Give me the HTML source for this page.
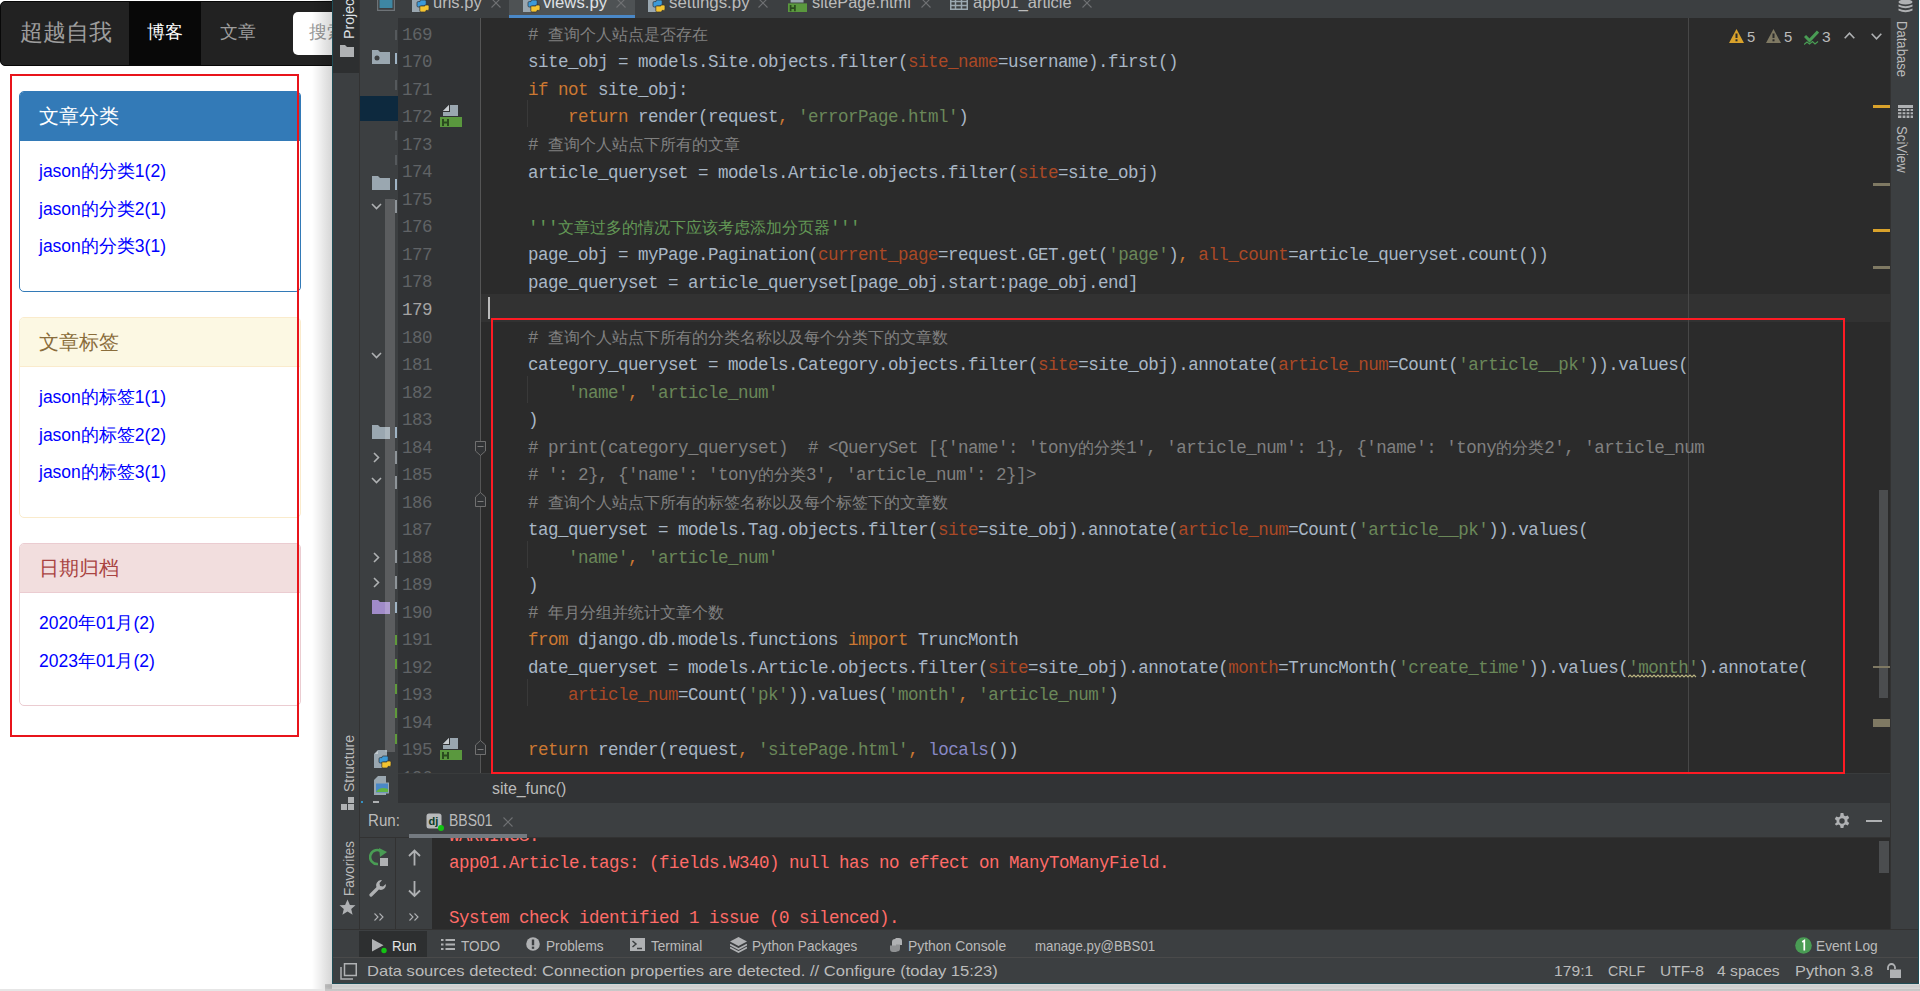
<!DOCTYPE html>
<html><head><meta charset="utf-8">
<style>
*{margin:0;padding:0;box-sizing:border-box}
html,body{width:1920px;height:991px;overflow:hidden;background:#fff;font-family:"Liberation Sans",sans-serif}
.a{position:absolute}
.pn{position:absolute;left:19px;width:282px;border:1px solid;border-radius:5px;background:#fff;overflow:hidden}
.ph{position:absolute;left:0;top:0;width:280px;height:49px;border-bottom:1px solid;font-size:20px;padding:0 0 0 19px;line-height:48px;white-space:nowrap}
.lk{position:absolute;left:19px;font-size:17.5px;line-height:20px;color:#00f;white-space:nowrap}
.m{position:absolute;font-family:"Liberation Mono",monospace;font-size:17.5px;letter-spacing:-0.5px;line-height:27.5px;white-space:pre;color:#a9b7c6}
.u{position:absolute;font-family:"Liberation Sans",sans-serif;white-space:nowrap}
.m i{font-style:normal;display:inline-block;width:16px;text-align:center;font-size:16px;letter-spacing:0}
.k{color:#cc7832}.s{color:#6a8759}.c{color:#808080}.n{color:#aa4926}.b{color:#8888c6}.d{color:#629755}
.ln{position:absolute;left:0px;width:34px;text-align:right;font-family:"Liberation Mono",monospace;font-size:17.5px;letter-spacing:-0.5px;line-height:27.5px;color:#606366}
</style></head><body>
<div class="a" style="left:0;top:1px;width:340px;height:65px;background:#222;border:1px solid #080808;border-radius:5px"></div>
<div class="u" style="left:20px;top:20px;font-size:22.5px;line-height:26px;color:#9d9d9d">超越自我</div>
<div class="a" style="left:129px;top:2px;width:72px;height:63px;background:#080808"></div>
<div class="u" style="left:147px;top:22px;font-size:17.5px;line-height:20px;color:#fff">博客</div>
<div class="u" style="left:220px;top:22px;font-size:17.5px;line-height:20px;color:#9d9d9d">文章</div>
<div class="a" style="left:293px;top:12px;width:80px;height:43px;background:#fff;border-radius:5px"></div>
<div class="u" style="left:309px;top:22px;font-size:17.5px;line-height:20px;color:#999">搜索</div>
<div class="pn" style="top:91px;height:201px;border-color:#337ab7">
  <div class="ph" style="background:#337ab7;color:#fff;border-color:#337ab7">文章分类</div>
  <div class="lk" style="top:69px">jason的分类1(2)</div>
  <div class="lk" style="top:107px">jason的分类2(1)</div>
  <div class="lk" style="top:144px">jason的分类3(1)</div>
</div>
<div class="pn" style="top:317px;height:201px;border-color:#faebcc">
  <div class="ph" style="background:#fcf8e3;color:#8a6d3b;border-color:#faebcc">文章标签</div>
  <div class="lk" style="top:69px">jason的标签1(1)</div>
  <div class="lk" style="top:107px">jason的标签2(2)</div>
  <div class="lk" style="top:144px">jason的标签3(1)</div>
</div>
<div class="pn" style="top:543px;height:163px;border-color:#ebccd1">
  <div class="ph" style="background:#f2dede;color:#a94442;border-color:#ebccd1">日期归档</div>
  <div class="lk" style="top:69px">2020年01月(2)</div>
  <div class="lk" style="top:107px">2023年01月(2)</div>
</div>
<div class="a" style="left:10px;top:74px;width:289px;height:663px;border:2px solid #e8141b"></div>
<div class="a" style="left:312px;top:0;width:20px;height:991px;background:linear-gradient(to right,rgba(0,0,0,0),rgba(0,0,0,.16))"></div>
<div class="a" style="left:0;top:989px;width:1920px;height:2px;background:#e6e6e6"></div>
<div class="a" style="left:325px;top:984px;width:1595px;height:7px;background:linear-gradient(to bottom,rgba(0,0,0,.15),rgba(0,0,0,.2) 30%,rgba(0,0,0,.12) 100%)"></div>

<div class="a" style="left:332px;top:0;width:1587px;height:984px;background:#3c3f41;border-left:1px solid #1f4d56;border-right:1px solid #1f4d56;border-bottom:1px solid #1f4d56"></div>
<!-- left tool strip selected -->
<div class="a" style="left:333px;top:0;width:26px;height:73px;background:#2d2f30"></div>
<div class="a" style="left:359px;top:0;width:1px;height:929px;background:#323232"></div>
<!-- gutter -->
<div class="a" style="left:398px;top:18px;width:83px;height:755px;background:#313335"></div>
<div class="a" style="left:480px;top:18px;width:1px;height:755px;background:#555"></div>
<!-- editor -->
<div class="a" style="left:481px;top:18px;width:1409px;height:755px;background:#2b2b2b"></div>
<div class="a" style="left:481px;top:294px;width:1409px;height:27.5px;background:#323232"></div>
<div class="a" style="left:1688px;top:18px;width:1px;height:755px;background:#474747"></div>
<!-- breadcrumb -->
<div class="a" style="left:398px;top:773px;width:1492px;height:30px;background:#313335;border-top:1px solid #393b3c"></div>
<!-- run console -->
<div class="a" style="left:432px;top:838px;width:1458px;height:91px;background:#2b2b2b"></div>
<div class="a" style="left:360px;top:837px;width:1530px;height:1px;background:#323232"></div>
<div class="a" style="left:333px;top:929px;width:1585px;height:1px;background:#323232"></div>
<div class="a" style="left:333px;top:957px;width:1585px;height:1px;background:#4a4a4a"></div>
<!-- right strip -->
<div class="a" style="left:1890px;top:18px;width:1px;height:911px;background:#323232"></div>
<div class="a" style="left:398px;top:18px;width:1492px;height:755px;overflow:hidden"><div class="m" style="left:90px;top:3.90px">    <span class="c"># <i>查</i><i>询</i><i>个</i><i>人</i><i>站</i><i>点</i><i>是</i><i>否</i><i>存</i><i>在</i></span></div>
<div class="ln" style="top:3.80px;">169</div>
<div class="m" style="left:90px;top:31.42px">    site_obj = models.Site.objects.filter(<span class="n">site_name</span>=username).first()</div>
<div class="ln" style="top:31.32px;">170</div>
<div class="m" style="left:90px;top:58.94px">    <span class="k">if not</span> site_obj:</div>
<div class="ln" style="top:58.84px;">171</div>
<div class="m" style="left:90px;top:86.46px">        <span class="k">return</span> render(request<span class="k">,</span> <span class="s">'errorPage.html'</span>)</div>
<div class="ln" style="top:86.36px;">172</div>
<div class="m" style="left:90px;top:113.98px">    <span class="c"># <i>查</i><i>询</i><i>个</i><i>人</i><i>站</i><i>点</i><i>下</i><i>所</i><i>有</i><i>的</i><i>文</i><i>章</i></span></div>
<div class="ln" style="top:113.88px;">173</div>
<div class="m" style="left:90px;top:141.50px">    article_queryset = models.Article.objects.filter(<span class="n">site</span>=site_obj)</div>
<div class="ln" style="top:141.40px;">174</div>
<div class="m" style="left:90px;top:169.02px"></div>
<div class="ln" style="top:168.92px;">175</div>
<div class="m" style="left:90px;top:196.54px">    <span class="d">'''<i>文</i><i>章</i><i>过</i><i>多</i><i>的</i><i>情</i><i>况</i><i>下</i><i>应</i><i>该</i><i>考</i><i>虑</i><i>添</i><i>加</i><i>分</i><i>页</i><i>器</i>'''</span></div>
<div class="ln" style="top:196.44px;">176</div>
<div class="m" style="left:90px;top:224.06px">    page_obj = myPage.Pagination(<span class="n">current_page</span>=request.GET.get(<span class="s">'page'</span>)<span class="k">,</span> <span class="n">all_count</span>=article_queryset.count())</div>
<div class="ln" style="top:223.96px;">177</div>
<div class="m" style="left:90px;top:251.58px">    page_queryset = article_queryset[page_obj.start:page_obj.end]</div>
<div class="ln" style="top:251.48px;">178</div>
<div class="m" style="left:90px;top:279.10px"></div>
<div class="ln" style="top:279.00px;color:#a4a3a3">179</div>
<div class="m" style="left:90px;top:306.62px">    <span class="c"># <i>查</i><i>询</i><i>个</i><i>人</i><i>站</i><i>点</i><i>下</i><i>所</i><i>有</i><i>的</i><i>分</i><i>类</i><i>名</i><i>称</i><i>以</i><i>及</i><i>每</i><i>个</i><i>分</i><i>类</i><i>下</i><i>的</i><i>文</i><i>章</i><i>数</i></span></div>
<div class="ln" style="top:306.52px;">180</div>
<div class="m" style="left:90px;top:334.14px">    category_queryset = models.Category.objects.filter(<span class="n">site</span>=site_obj).annotate(<span class="n">article_num</span>=Count(<span class="s">'article__pk'</span>)).values(</div>
<div class="ln" style="top:334.04px;">181</div>
<div class="m" style="left:90px;top:361.66px">        <span class="s">'name'</span><span class="k">,</span> <span class="s">'article_num'</span></div>
<div class="ln" style="top:361.56px;">182</div>
<div class="m" style="left:90px;top:389.18px">    )</div>
<div class="ln" style="top:389.08px;">183</div>
<div class="m" style="left:90px;top:416.70px">    <span class="c"># print(category_queryset)  # &lt;QuerySet [{'name': 'tony<i>的</i><i>分</i><i>类</i>1', 'article_num': 1}, {'name': 'tony<i>的</i><i>分</i><i>类</i>2', 'article_num</span></div>
<div class="ln" style="top:416.60px;">184</div>
<div class="m" style="left:90px;top:444.22px">    <span class="c"># ': 2}, {'name': 'tony<i>的</i><i>分</i><i>类</i>3', 'article_num': 2}]&gt;</span></div>
<div class="ln" style="top:444.12px;">185</div>
<div class="m" style="left:90px;top:471.74px">    <span class="c"># <i>查</i><i>询</i><i>个</i><i>人</i><i>站</i><i>点</i><i>下</i><i>所</i><i>有</i><i>的</i><i>标</i><i>签</i><i>名</i><i>称</i><i>以</i><i>及</i><i>每</i><i>个</i><i>标</i><i>签</i><i>下</i><i>的</i><i>文</i><i>章</i><i>数</i></span></div>
<div class="ln" style="top:471.64px;">186</div>
<div class="m" style="left:90px;top:499.26px">    tag_queryset = models.Tag.objects.filter(<span class="n">site</span>=site_obj).annotate(<span class="n">article_num</span>=Count(<span class="s">'article__pk'</span>)).values(</div>
<div class="ln" style="top:499.16px;">187</div>
<div class="m" style="left:90px;top:526.78px">        <span class="s">'name'</span><span class="k">,</span> <span class="s">'article_num'</span></div>
<div class="ln" style="top:526.68px;">188</div>
<div class="m" style="left:90px;top:554.30px">    )</div>
<div class="ln" style="top:554.20px;">189</div>
<div class="m" style="left:90px;top:581.82px">    <span class="c"># <i>年</i><i>月</i><i>分</i><i>组</i><i>并</i><i>统</i><i>计</i><i>文</i><i>章</i><i>个</i><i>数</i></span></div>
<div class="ln" style="top:581.72px;">190</div>
<div class="m" style="left:90px;top:609.34px">    <span class="k">from</span> django.db.models.functions <span class="k">import</span> TruncMonth</div>
<div class="ln" style="top:609.24px;">191</div>
<div class="m" style="left:90px;top:636.86px">    date_queryset = models.Article.objects.filter(<span class="n">site</span>=site_obj).annotate(<span class="n">month</span>=TruncMonth(<span class="s">'create_time'</span>)).values(<span class="s">'month'</span>).annotate(</div>
<div class="ln" style="top:636.76px;">192</div>
<div class="m" style="left:90px;top:664.38px">        <span class="n">article_num</span>=Count(<span class="s">'pk'</span>)).values(<span class="s">'month'</span><span class="k">,</span> <span class="s">'article_num'</span>)</div>
<div class="ln" style="top:664.28px;">193</div>
<div class="m" style="left:90px;top:691.90px"></div>
<div class="ln" style="top:691.80px;">194</div>
<div class="m" style="left:90px;top:719.42px">    <span class="k">return</span> render(request<span class="k">,</span> <span class="s">'sitePage.html'</span><span class="k">,</span> <span class="b">locals</span>())</div>
<div class="ln" style="top:719.32px;">195</div>
<div class="m" style="left:90px;top:746.94px"></div>
<div class="ln" style="top:746.84px;">196</div></div><div class="a" style="left:509px;top:0px;width:126px;height:15px;background:#4e5254;"></div>
<div class="a" style="left:509px;top:15px;width:126px;height:3px;background:#4a88c7;"></div>
<svg class="a" style="left:377px;top:0px" width="18" height="11" viewBox="0 0 18 11"><rect x="0.5" y="-2" width="17" height="12.5" fill="none" stroke="#6e7377" stroke-width="1.5"/><rect x="2.5" y="-2" width="13" height="10" fill="#3e87a3"/></svg>
<svg class="a" style="left:412px;top:-6px" width="18" height="19" viewBox="0 0 18 19"><path d="M0 4 L4 0 H13 V18 H0 Z" fill="#9aa7b0"/><path d="M0.6 4 L4 0.6 V4 Z" fill="#c3cacf"/><g transform="translate(5,6)"><path d="M4 0h4a1.2 1.2 0 0 1 1.2 1.2v4.8h-5v1h-3a1.2 1.2 0 0 1-1.2-1.2v-3a1.2 1.2 0 0 1 1.2-1.2h1.8v-.4a1.2 1.2 0 0 1 1-1.2z" fill="#3d9ad8" stroke="#2f3133" stroke-width=".7"/><path d="M8 12h-4a1.2 1.2 0 0 1-1.2-1.2v-4.8h5v-1h3a1.2 1.2 0 0 1 1.2 1.2v3a1.2 1.2 0 0 1-1.2 1.2h-1.8v.4a1.2 1.2 0 0 1-1 1.2z" fill="#f4c430" stroke="#2f3133" stroke-width=".7"/></g></svg>
<div class="u" style="left:433.0px;top:-4.54px;font-size:16.00px;line-height:16.00px;color:#bbbbbb;transform:scaleX(1.0330);transform-origin:0 0;">urls.py</div>
<div class="u" style="left:543.1px;top:-4.54px;font-size:16.00px;line-height:16.00px;color:#dfe1e5;transform:scaleX(1.0445);transform-origin:0 0;">views.py</div>
<svg class="a" style="left:523px;top:-6px" width="18" height="19" viewBox="0 0 18 19"><path d="M0 4 L4 0 H13 V18 H0 Z" fill="#9aa7b0"/><path d="M0.6 4 L4 0.6 V4 Z" fill="#c3cacf"/><g transform="translate(5,6)"><path d="M4 0h4a1.2 1.2 0 0 1 1.2 1.2v4.8h-5v1h-3a1.2 1.2 0 0 1-1.2-1.2v-3a1.2 1.2 0 0 1 1.2-1.2h1.8v-.4a1.2 1.2 0 0 1 1-1.2z" fill="#3d9ad8" stroke="#2f3133" stroke-width=".7"/><path d="M8 12h-4a1.2 1.2 0 0 1-1.2-1.2v-4.8h5v-1h3a1.2 1.2 0 0 1 1.2 1.2v3a1.2 1.2 0 0 1-1.2 1.2h-1.8v.4a1.2 1.2 0 0 1-1 1.2z" fill="#f4c430" stroke="#2f3133" stroke-width=".7"/></g></svg>
<svg class="a" style="left:648px;top:-6px" width="18" height="19" viewBox="0 0 18 19"><path d="M0 4 L4 0 H13 V18 H0 Z" fill="#9aa7b0"/><path d="M0.6 4 L4 0.6 V4 Z" fill="#c3cacf"/><g transform="translate(5,6)"><path d="M4 0h4a1.2 1.2 0 0 1 1.2 1.2v4.8h-5v1h-3a1.2 1.2 0 0 1-1.2-1.2v-3a1.2 1.2 0 0 1 1.2-1.2h1.8v-.4a1.2 1.2 0 0 1 1-1.2z" fill="#3d9ad8" stroke="#2f3133" stroke-width=".7"/><path d="M8 12h-4a1.2 1.2 0 0 1-1.2-1.2v-4.8h5v-1h3a1.2 1.2 0 0 1 1.2 1.2v3a1.2 1.2 0 0 1-1.2 1.2h-1.8v.4a1.2 1.2 0 0 1-1 1.2z" fill="#f4c430" stroke="#2f3133" stroke-width=".7"/></g></svg>
<div class="u" style="left:668.8px;top:-4.54px;font-size:16.00px;line-height:16.00px;color:#bbbbbb;transform:scaleX(1.0535);transform-origin:0 0;">settings.py</div>
<svg class="a" style="left:788px;top:-7px" width="19" height="19" viewBox="0 0 22 22"><path d="M9 0 L3 6 L3 11 L18 11 L18 0 Z" fill="#9aa7b0"/><path d="M9 0 L9 6 L3 6 Z" fill="#c9cdd0"/><path d="M9 6 L3 6 L3 7 L10 7 L10 0 L9 0 Z" fill="#313335"/><rect x="0" y="12" width="22" height="10" fill="#5a983e"/><path d="M3 14 v7 M8 14 v7 M3 17.5 h5" stroke="#2a4a1e" stroke-width="2" fill="none"/></svg>
<div class="u" style="left:811.9px;top:-4.54px;font-size:16.00px;line-height:16.00px;color:#bbbbbb;transform:scaleX(1.0190);transform-origin:0 0;">sitePage.html</div>
<svg class="a" style="left:950px;top:0px" width="18" height="10" viewBox="0 0 18 10"><path d="M0.75 -2 V9.25 H17.25 V-2 M0 1.5 H18 M0 5.5 H18 M5.5 -2 V9 M11.5 -2 V9" stroke="#9aa7b0" stroke-width="1.5" fill="none"/></svg>
<div class="u" style="left:973.1px;top:-4.54px;font-size:16.00px;line-height:16.00px;color:#bbbbbb;transform:scaleX(1.0261);transform-origin:0 0;">app01_article</div>
<svg class="a" style="left:491px;top:-2px" width="10" height="10" viewBox="0 0 10 10"><path d="M0.5 0.5 L9.5 9.5 M9.5 0.5 L0.5 9.5" stroke="#6f7173" stroke-width="1.1"/></svg>
<svg class="a" style="left:616px;top:-2px" width="10" height="10" viewBox="0 0 10 10"><path d="M0.5 0.5 L9.5 9.5 M9.5 0.5 L0.5 9.5" stroke="#6f7173" stroke-width="1.1"/></svg>
<svg class="a" style="left:758px;top:-2px" width="10" height="10" viewBox="0 0 10 10"><path d="M0.5 0.5 L9.5 9.5 M9.5 0.5 L0.5 9.5" stroke="#6f7173" stroke-width="1.1"/></svg>
<svg class="a" style="left:921px;top:-2px" width="10" height="10" viewBox="0 0 10 10"><path d="M0.5 0.5 L9.5 9.5 M9.5 0.5 L0.5 9.5" stroke="#6f7173" stroke-width="1.1"/></svg>
<svg class="a" style="left:1082px;top:-2px" width="10" height="10" viewBox="0 0 10 10"><path d="M0.5 0.5 L9.5 9.5 M9.5 0.5 L0.5 9.5" stroke="#6f7173" stroke-width="1.1"/></svg>
<div class="u" style="left:340.5px;top:38.5px;font-size:15.0px;line-height:15.0px;color:#dfe1e5;transform-origin:0 0;transform:rotate(-90deg) scaleX(0.9425)">Project</div>
<svg class="a" style="left:340px;top:45px" width="14" height="12" viewBox="0 0 14 12"><path d="M0 0 h5 l2 2 h7 v10 h-14 z" fill="#afb1b3"/></svg>
<div class="u" style="left:341.0px;top:792.0px;font-size:15.0px;line-height:15.0px;color:#bbbbbb;transform-origin:0 0;transform:rotate(-90deg) scaleX(0.9366)">Structure</div>
<svg class="a" style="left:341px;top:797px" width="14" height="14" viewBox="0 0 14 14"><rect x="7" y="0" width="6" height="6" fill="#afb1b3"/><rect x="0" y="7" width="6" height="6" fill="#afb1b3"/><rect x="7" y="7" width="6" height="6" fill="#afb1b3"/></svg>
<div class="u" style="left:341.0px;top:896.0px;font-size:15.0px;line-height:15.0px;color:#bbbbbb;transform-origin:0 0;transform:rotate(-90deg) scaleX(0.8916)">Favorites</div>
<svg class="a" style="left:339px;top:899px" width="17" height="17" viewBox="0 0 17 17"><path d="M8.5 0.5 L10.9 6 L16.5 6.3 L12.2 10 L13.6 15.8 L8.5 12.6 L3.4 15.8 L4.8 10 L0.5 6.3 L6.1 6 Z" fill="#afb1b3"/></svg>
<div class="a" style="left:360px;top:96px;width:38px;height:25px;background:#0d293e;"></div>
<svg class="a" style="left:372px;top:50px" width="18" height="14" viewBox="0 0 18 14"><path d="M0 0 h6 l2 2 h10 v12 h-18 z" fill="#9aa7b0"/><circle cx="5" cy="8" r="2.5" fill="#3c3f41"/></svg>
<svg class="a" style="left:372px;top:176px" width="18" height="14" viewBox="0 0 18 14"><path d="M0 0 h6 l2 2 h10 v12 h-18 z" fill="#9aa7b0"/></svg>
<svg class="a" style="left:372px;top:425px" width="18" height="14" viewBox="0 0 18 14"><path d="M0 0 h6 l2 2 h10 v12 h-18 z" fill="#9aa7b0"/></svg>
<svg class="a" style="left:372px;top:600px" width="18" height="14" viewBox="0 0 18 14"><path d="M0 0 h6 l2 2 h10 v12 h-18 z" fill="#a08bc8"/></svg>
<svg class="a" style="left:371px;top:203px" width="11" height="11" viewBox="0 0 11 11"><path d="M1 1 L5.5 5.5 L10 1" stroke="#afb1b3" stroke-width="1.6" fill="none"/></svg>
<svg class="a" style="left:371px;top:352px" width="11" height="11" viewBox="0 0 11 11"><path d="M1 1 L5.5 5.5 L10 1" stroke="#afb1b3" stroke-width="1.6" fill="none"/></svg>
<svg class="a" style="left:371px;top:477px" width="11" height="11" viewBox="0 0 11 11"><path d="M1 1 L5.5 5.5 L10 1" stroke="#afb1b3" stroke-width="1.6" fill="none"/></svg>
<svg class="a" style="left:373px;top:452px" width="11" height="11" viewBox="0 0 11 11"><path d="M1 1 L5.5 5.5 L1 10" stroke="#afb1b3" stroke-width="1.6" fill="none"/></svg>
<svg class="a" style="left:373px;top:552px" width="11" height="11" viewBox="0 0 11 11"><path d="M1 1 L5.5 5.5 L1 10" stroke="#afb1b3" stroke-width="1.6" fill="none"/></svg>
<svg class="a" style="left:373px;top:577px" width="11" height="11" viewBox="0 0 11 11"><path d="M1 1 L5.5 5.5 L1 10" stroke="#afb1b3" stroke-width="1.6" fill="none"/></svg>
<div class="a" style="left:395px;top:30px;width:2px;height:10px;background:#55595c;"></div>
<div class="a" style="left:395px;top:80px;width:2px;height:10px;background:#55595c;"></div>
<div class="a" style="left:395px;top:131px;width:2px;height:9px;background:#55595c;"></div>
<div class="a" style="left:395px;top:155px;width:2px;height:10px;background:#55595c;"></div>
<div class="a" style="left:395px;top:200px;width:2px;height:13px;background:#8e9499;"></div>
<div class="a" style="left:395px;top:451px;width:2px;height:13px;background:#8e9499;"></div>
<div class="a" style="left:395px;top:476px;width:2px;height:13px;background:#8e9499;"></div>
<div class="a" style="left:395px;top:550px;width:2px;height:13px;background:#8e9499;"></div>
<div class="a" style="left:395px;top:576px;width:2px;height:13px;background:#8e9499;"></div>
<div class="a" style="left:395px;top:53px;width:2px;height:11px;background:#9fb3c4;"></div>
<div class="a" style="left:395px;top:179px;width:2px;height:11px;background:#9fb3c4;"></div>
<div class="a" style="left:395px;top:427px;width:2px;height:11px;background:#9fb3c4;"></div>
<div class="a" style="left:395px;top:602px;width:2px;height:11px;background:#9fb3c4;"></div>
<div class="a" style="left:395px;top:635px;width:2px;height:10px;background:#5f9a3a;"></div>
<div class="a" style="left:395px;top:659px;width:2px;height:10px;background:#5f9a3a;"></div>
<div class="a" style="left:395px;top:684px;width:2px;height:10px;background:#5f9a3a;"></div>
<div class="a" style="left:395px;top:708px;width:2px;height:10px;background:#5f9a3a;"></div>
<div class="a" style="left:395px;top:734px;width:2px;height:10px;background:#5f9a3a;"></div>
<svg class="a" style="left:374px;top:750px" width="18" height="19" viewBox="0 0 18 19"><path d="M0 4 L4 0 H13 V18 H0 Z" fill="#9aa7b0"/><path d="M0.6 4 L4 0.6 V4 Z" fill="#c3cacf"/><g transform="translate(5,6)"><path d="M4 0h4a1.2 1.2 0 0 1 1.2 1.2v4.8h-5v1h-3a1.2 1.2 0 0 1-1.2-1.2v-3a1.2 1.2 0 0 1 1.2-1.2h1.8v-.4a1.2 1.2 0 0 1 1-1.2z" fill="#3d9ad8" stroke="#2f3133" stroke-width=".7"/><path d="M8 12h-4a1.2 1.2 0 0 1-1.2-1.2v-4.8h5v-1h3a1.2 1.2 0 0 1 1.2 1.2v3a1.2 1.2 0 0 1-1.2 1.2h-1.8v.4a1.2 1.2 0 0 1-1 1.2z" fill="#f4c430" stroke="#2f3133" stroke-width=".7"/></g></svg>
<svg class="a" style="left:374px;top:776px" width="17" height="19" viewBox="0 0 17 19"><path d="M0 4 L4 0 L12 0 L12 19 L0 19 Z" fill="#9aa7b0"/><rect x="1.5" y="7" width="13" height="10" fill="#4a88c7" stroke="#9aa7b0"/><path d="M2 16 Q6 10 14 13 V16 Z" fill="#62b543"/></svg>
<div class="a" style="left:385px;top:199px;width:10px;height:553px;background:rgba(255,255,255,.16);"></div>
<div class="a" style="left:361px;top:801px;width:2px;height:2px;background:#3592c4;"></div>
<div class="a" style="left:373px;top:801px;width:6px;height:2px;background:#afb1b3;"></div>
<svg class="a" style="left:440px;top:105px" width="22" height="22" viewBox="0 0 22 22"><path d="M9 0 L3 6 L3 11 L18 11 L18 0 Z" fill="#9aa7b0"/><path d="M9 0 L9 6 L3 6 Z" fill="#c9cdd0"/><path d="M9 6 L3 6 L3 7 L10 7 L10 0 L9 0 Z" fill="#313335"/><rect x="0" y="12" width="22" height="10" fill="#5a983e"/><path d="M3 14 v7 M8 14 v7 M3 17.5 h5" stroke="#2a4a1e" stroke-width="2" fill="none"/></svg>
<svg class="a" style="left:440px;top:738px" width="22" height="22" viewBox="0 0 22 22"><path d="M9 0 L3 6 L3 11 L18 11 L18 0 Z" fill="#9aa7b0"/><path d="M9 0 L9 6 L3 6 Z" fill="#c9cdd0"/><path d="M9 6 L3 6 L3 7 L10 7 L10 0 L9 0 Z" fill="#313335"/><rect x="0" y="12" width="22" height="10" fill="#5a983e"/><path d="M3 14 v7 M8 14 v7 M3 17.5 h5" stroke="#2a4a1e" stroke-width="2" fill="none"/></svg>
<svg class="a" style="left:475px;top:441px" width="11" height="15" viewBox="0 0 11 15"><path d="M0.5 0.5 L10.5 0.5 L10.5 10 L5.5 14.5 L0.5 10 Z" fill="#313335" stroke="#707070" stroke-width="1"/><path d="M2.5 5.5 h6" stroke="#7a7a7a" stroke-width="1"/></svg>
<svg class="a" style="left:475px;top:492px" width="11" height="15" viewBox="0 0 11 15"><path d="M5.5 0.5 L10.5 5 L10.5 14.5 L0.5 14.5 L0.5 5 Z" fill="#313335" stroke="#707070" stroke-width="1"/><path d="M2.5 9.5 h6" stroke="#7a7a7a" stroke-width="1"/></svg>
<svg class="a" style="left:475px;top:740px" width="11" height="15" viewBox="0 0 11 15"><path d="M5.5 0.5 L10.5 5 L10.5 14.5 L0.5 14.5 L0.5 5 Z" fill="#313335" stroke="#707070" stroke-width="1"/><path d="M2.5 9.5 h6" stroke="#7a7a7a" stroke-width="1"/></svg>
<div class="a" style="left:527px;top:100px;width:1px;height:27px;background:#393939;"></div>
<div class="a" style="left:527px;top:376px;width:1px;height:27px;background:#393939;"></div>
<div class="a" style="left:527px;top:541px;width:1px;height:27px;background:#393939;"></div>
<div class="a" style="left:527px;top:679px;width:1px;height:27px;background:#393939;"></div>
<div class="a" style="left:488px;top:297px;width:2px;height:22px;background:#bbbbbb;"></div>
<svg class="a" style="left:1628px;top:674px" width="70" height="4" viewBox="0 0 70 4"><path d="M0 3 L2 1 L4 3 L6 1 L8 3 L10 1 L12 3 L14 1 L16 3 L18 1 L20 3 L22 1 L24 3 L26 1 L28 3 L30 1 L32 3 L34 1 L36 3 L38 1 L40 3 L42 1 L44 3 L46 1 L48 3 L50 1 L52 3 L54 1 L56 3 L58 1 L60 3 L62 1 L64 3 L66 1 L68 3" stroke="#b8b27f" stroke-width="1.1" fill="none"/></svg>
<div class="a" style="left:491px;top:318px;width:1354px;height:456px;border:2px solid #fe1b24"></div>
<svg class="a" style="left:1729px;top:29px" width="15" height="14" viewBox="0 0 15 14"><path d="M7.5 0 L15 14 H0 Z" fill="#d9a22b"/><rect x="6.5" y="4.5" width="2" height="4.5" fill="#2b2b2b"/><rect x="6.5" y="10.3" width="2" height="2" fill="#2b2b2b"/></svg>
<div class="u" style="left:1747.4px;top:28.88px;font-size:15.50px;line-height:15.50px;color:#bbbbbb;transform:scaleX(0.9559);transform-origin:0 0;">5</div>
<svg class="a" style="left:1766px;top:29px" width="15" height="14" viewBox="0 0 15 14"><path d="M7.5 0 L15 14 H0 Z" fill="#7f7963"/><rect x="6.5" y="4.5" width="2" height="4.5" fill="#2b2b2b"/><rect x="6.5" y="10.3" width="2" height="2" fill="#2b2b2b"/></svg>
<div class="u" style="left:1784.4px;top:28.88px;font-size:15.50px;line-height:15.50px;color:#bbbbbb;transform:scaleX(0.9559);transform-origin:0 0;">5</div>
<svg class="a" style="left:1804px;top:30px" width="15" height="15" viewBox="0 0 15 15"><path d="M1 6 L5.5 10.5 L14 1.5" stroke="#499c54" stroke-width="3" fill="none"/><path d="M0 14.5 L3 12 L5.5 14 L8.5 11.5 L11 14 L14 11.5" stroke="#499c54" stroke-width="1.2" fill="none"/></svg>
<div class="u" style="left:1822.0px;top:28.88px;font-size:15.50px;line-height:15.50px;color:#bbbbbb;transform:scaleX(1.0023);transform-origin:0 0;">3</div>
<svg class="a" style="left:1844px;top:32px" width="11" height="7" viewBox="0 0 11 7"><path d="M0.7 6.3 L5.5 1.2 L10.3 6.3" stroke="#afb1b3" stroke-width="1.6" fill="none"/></svg>
<svg class="a" style="left:1871px;top:33px" width="11" height="7" viewBox="0 0 11 7"><path d="M0.7 0.7 L5.5 5.8 L10.3 0.7" stroke="#afb1b3" stroke-width="1.6" fill="none"/></svg>
<div class="a" style="left:1873px;top:105px;width:17px;height:3px;background:#d9a22b;"></div>
<div class="a" style="left:1873px;top:183px;width:17px;height:3px;background:#7f7963;"></div>
<div class="a" style="left:1873px;top:229px;width:17px;height:3px;background:#d9a22b;"></div>
<div class="a" style="left:1873px;top:266px;width:17px;height:3px;background:#7f7963;"></div>
<div class="a" style="left:1873px;top:666px;width:17px;height:2px;background:#7f7963;"></div>
<div class="a" style="left:1873px;top:719px;width:17px;height:8px;background:#7f7963;"></div>
<div class="a" style="left:1879px;top:490px;width:9px;height:208px;background:#4b4d4f;"></div>
<div class="a" style="left:1873px;top:666px;width:17px;height:2px;background:#7f7963;"></div>
<div class="a" style="left:1873px;top:719px;width:17px;height:8px;background:#7f7963;"></div>
<svg class="a" style="left:1898px;top:0px" width="15" height="14" viewBox="0 0 15 14"><ellipse cx="7.5" cy="2" rx="7" ry="2.5" fill="#afb1b3"/><path d="M0.5 4.5 Q7.5 8 14.5 4.5 V6.5 Q7.5 10 0.5 6.5 Z M0.5 8.5 Q7.5 12 14.5 8.5 V10.5 Q7.5 14 0.5 10.5 Z" fill="#afb1b3"/></svg>
<div class="u" style="left:1910.0px;top:20.5px;font-size:15.5px;line-height:15.5px;color:#bbbbbb;transform-origin:0 0;transform:rotate(90deg) scaleX(0.8440)">Database</div>
<svg class="a" style="left:1898px;top:105px" width="15" height="13" viewBox="0 0 15 13"><path d="M0 0 h15 v13 h-15 z M0 3.2 h15 M0 6.4 h15 M0 9.6 h15 M3.5 0 v13 M7.5 0 v13 M11.5 0 v13" stroke="#3c3f41" stroke-width="0" fill="#afb1b3"/><path d="M0 3.5 h15 M0 6.7 h15 M0 9.9 h15 M4 3 v10 M8 3 v10 M12 3 v10" stroke="#3c3f41" stroke-width="1.2"/></svg>
<div class="u" style="left:1910.0px;top:125.5px;font-size:15.5px;line-height:15.5px;color:#bbbbbb;transform-origin:0 0;transform:rotate(90deg) scaleX(0.8526)">SciView</div>
<div class="u" style="left:492.4px;top:781.46px;font-size:16.00px;line-height:16.00px;color:#bbbbbb;transform:scaleX(0.9944);transform-origin:0 0;">site_func()</div>
<div class="u" style="left:368.1px;top:813.46px;font-size:16.00px;line-height:16.00px;color:#bbbbbb;transform:scaleX(0.9433);transform-origin:0 0;">Run:</div>
<svg class="a" style="left:426px;top:813px" width="19" height="19" viewBox="0 0 19 19"><rect x="0.5" y="0.5" width="15" height="15" rx="2.5" fill="#b7b9bb"/><text x="2.5" y="11.5" font-family="Liberation Sans" font-weight="bold" font-size="11" fill="#0c3b28">dj</text><circle cx="15" cy="15" r="3" fill="#13c313"/></svg>
<div class="u" style="left:449.2px;top:813.46px;font-size:16.00px;line-height:16.00px;color:#bbbbbb;transform:scaleX(0.8729);transform-origin:0 0;">BBS01</div>
<svg class="a" style="left:503px;top:817px" width="10" height="10" viewBox="0 0 10 10"><path d="M0.5 0.5 L9.5 9.5 M9.5 0.5 L0.5 9.5" stroke="#6f7173" stroke-width="1.1"/></svg>
<div class="a" style="left:409px;top:834px;width:118px;height:4px;background:#747a80;"></div>
<svg class="a" style="left:1834px;top:813px" width="16" height="16" viewBox="0 0 16 16"><path fill="#afb1b3" fill-rule="evenodd" d="M6.6 0h2.8l.5 2.4 1.6.9 2.3-.8 1.4 2.4-1.8 1.6v1.9l1.8 1.6-1.4 2.4-2.3-.8-1.6.9-.5 2.5H6.6l-.5-2.5-1.6-.9-2.3.8L.8 11.1l1.8-1.6V7.6L.8 6 2.2 3.5l2.3.8 1.6-.9zM8 5.3a2.7 2.7 0 1 0 0 5.4 2.7 2.7 0 0 0 0-5.4z"/></svg>
<div class="a" style="left:1866px;top:820px;width:16px;height:2px;background:#afb1b3;"></div>
<div class="a" style="left:395px;top:838px;width:1px;height:91px;background:#323232;"></div>
<svg class="a" style="left:369px;top:848px" width="20" height="19" viewBox="0 0 20 19"><path d="M13 4 A7 7 0 1 0 9 16" stroke="#499c54" stroke-width="2.6" fill="none"/><path d="M10 0 L18 4 L11 9 Z" fill="#499c54"/><rect x="11" y="10" width="8" height="8" fill="#afb1b3"/></svg>
<svg class="a" style="left:369px;top:879px" width="18" height="18" viewBox="0 0 18 18"><path d="M2 16 L9 9" stroke="#afb1b3" stroke-width="3.2" stroke-linecap="round"/><path d="M8.5 9.5 A5 5 0 0 1 13 1.2 L10.5 4 L11 7 L14 7.5 L16.8 5 A5 5 0 0 1 8.5 9.5 Z" fill="#afb1b3"/></svg>
<svg class="a" style="left:408px;top:849px" width="13" height="17" viewBox="0 0 13 17"><path d="M6.5 1.5 V16.5 M1 7 L6.5 1.5 L12 7" stroke="#afb1b3" stroke-width="1.8" fill="none"/></svg>
<svg class="a" style="left:408px;top:881px" width="13" height="17" viewBox="0 0 13 17"><path d="M6.5 0 V15 M1 9.5 L6.5 15 L12 9.5" stroke="#afb1b3" stroke-width="1.8" fill="none"/></svg>
<svg class="a" style="left:374px;top:913px" width="11" height="8" viewBox="0 0 11 8"><path d="M0.5 0.5 L4 4 L0.5 7.5 M5.5 0.5 L9 4 L5.5 7.5" stroke="#afb1b3" stroke-width="1.1" fill="none"/></svg>
<svg class="a" style="left:409px;top:913px" width="11" height="8" viewBox="0 0 11 8"><path d="M0.5 0.5 L4 4 L0.5 7.5 M5.5 0.5 L9 4 L5.5 7.5" stroke="#afb1b3" stroke-width="1.1" fill="none"/></svg>
<div class="a" style="left:432px;top:838px;width:1458px;height:91px;overflow:hidden"><div class="m" style="left:17px;top:-15.4px;color:#ff6b68">WARNINGS:</div><div class="m" style="left:17px;top:12.1px;color:#ff6b68">app01.Article.tags: (fields.W340) null has no effect on ManyToManyField.</div><div class="m" style="left:17px;top:67.1px;color:#ff6b68">System check identified 1 issue (0 silenced).</div></div>
<div class="a" style="left:1879px;top:841px;width:10px;height:32px;background:#4b4d4f;"></div>
<div class="a" style="left:359px;top:931px;width:68px;height:26px;background:#2d2f30;"></div>
<svg class="a" style="left:372px;top:939px" width="16" height="15" viewBox="0 0 16 15"><path d="M0 0 L11.5 6.2 L0 12.5 Z" fill="#afb1b3"/><circle cx="12" cy="11.5" r="2.7" fill="#13c313"/></svg>
<div class="u" style="left:391.6px;top:938.73px;font-size:14.50px;line-height:14.50px;color:#e6e6e6;transform:scaleX(0.9196);transform-origin:0 0;">Run</div>
<svg class="a" style="left:441px;top:939px" width="14" height="12" viewBox="0 0 14 12"><path d="M0 1 h2.5 M0 5.5 h2.5 M0 10 h2.5 M4.5 1 h9.5 M4.5 5.5 h9.5 M4.5 10 h9.5" stroke="#afb1b3" stroke-width="2"/></svg>
<div class="u" style="left:460.7px;top:938.73px;font-size:14.50px;line-height:14.50px;color:#bbbbbb;transform:scaleX(0.9397);transform-origin:0 0;">TODO</div>
<svg class="a" style="left:526px;top:937px" width="14" height="14" viewBox="0 0 14 14"><circle cx="7" cy="7" r="6.8" fill="#afb1b3"/><rect x="5.8" y="2.5" width="2.4" height="5.8" fill="#3c3f41"/><rect x="5.8" y="9.6" width="2.4" height="2.2" fill="#3c3f41"/></svg>
<div class="u" style="left:546.0px;top:938.73px;font-size:14.50px;line-height:14.50px;color:#bbbbbb;transform:scaleX(0.9399);transform-origin:0 0;">Problems</div>
<svg class="a" style="left:630px;top:938px" width="15" height="13" viewBox="0 0 15 13"><rect x="0" y="0" width="15" height="13" fill="#afb1b3"/><path d="M2.5 3 L6 6 L2.5 9" stroke="#3c3f41" stroke-width="1.5" fill="none"/><path d="M7 10.5 h5" stroke="#3c3f41" stroke-width="1.5"/></svg>
<div class="u" style="left:650.6px;top:938.73px;font-size:14.50px;line-height:14.50px;color:#bbbbbb;transform:scaleX(0.9355);transform-origin:0 0;">Terminal</div>
<svg class="a" style="left:730px;top:937px" width="17" height="16" viewBox="0 0 17 16"><path d="M8.5 0 L17 4.5 L8.5 9 L0 4.5 Z" fill="#afb1b3"/><path d="M0 7.5 L8.5 12 L17 7.5 M0 10.5 L8.5 15 L17 10.5" stroke="#afb1b3" stroke-width="1.6" fill="none"/></svg>
<div class="u" style="left:751.9px;top:938.73px;font-size:14.50px;line-height:14.50px;color:#bbbbbb;transform:scaleX(0.9327);transform-origin:0 0;">Python Packages</div>
<svg class="a" style="left:889px;top:938px" width="14" height="14" viewBox="0 0 14 14"><path d="M7 0 h3 a3 3 0 0 1 3 3 v4 h-6 v1 h-4 v-4 a3 3 0 0 1 3 -3 z" fill="#afb1b3"/><path d="M7 14 h-3 a3 3 0 0 1 -3 -3 v-3.5 h6 v-1 h4 v4 a3 3 0 0 1 -3 3 z" fill="#8f9193"/></svg>
<div class="u" style="left:908.4px;top:938.73px;font-size:14.50px;line-height:14.50px;color:#bbbbbb;transform:scaleX(0.9589);transform-origin:0 0;">Python Console</div>
<div class="u" style="left:1035.4px;top:938.73px;font-size:14.50px;line-height:14.50px;color:#bbbbbb;transform:scaleX(0.9130);transform-origin:0 0;">manage.py@BBS01</div>
<svg class="a" style="left:1795px;top:937px" width="17" height="17" viewBox="0 0 17 17"><circle cx="8.5" cy="8.5" r="8.3" fill="#499c54"/><path d="M7.2 5 L9.3 3.6 V13.5" stroke="#fff" stroke-width="1.7" fill="none"/></svg>
<div class="u" style="left:1816.4px;top:938.73px;font-size:14.50px;line-height:14.50px;color:#bbbbbb;transform:scaleX(0.9443);transform-origin:0 0;">Event Log</div>
<svg class="a" style="left:340px;top:963px" width="17" height="17" viewBox="0 0 17 17"><path d="M4.5 0.75 H16.25 V12.5 H4.5 Z" stroke="#afb1b3" stroke-width="1.5" fill="none"/><path d="M1 4 V16 H13" stroke="#afb1b3" stroke-width="1.5" fill="none"/></svg>
<div class="u" style="left:367.3px;top:962.80px;font-size:15.00px;line-height:15.00px;color:#bbbbbb;transform:scaleX(1.1044);transform-origin:0 0;">Data sources detected: Connection properties are detected. // Configure (today 15:23)</div>
<div class="u" style="left:1553.9px;top:963.30px;font-size:15.00px;line-height:15.00px;color:#bbbbbb;transform:scaleX(1.0443);transform-origin:0 0;">179:1</div>
<div class="u" style="left:1608.4px;top:963.30px;font-size:15.00px;line-height:15.00px;color:#bbbbbb;transform:scaleX(0.9497);transform-origin:0 0;">CRLF</div>
<div class="u" style="left:1660.4px;top:963.30px;font-size:15.00px;line-height:15.00px;color:#bbbbbb;transform:scaleX(1.0331);transform-origin:0 0;">UTF-8</div>
<div class="u" style="left:1717.4px;top:963.30px;font-size:15.00px;line-height:15.00px;color:#bbbbbb;transform:scaleX(1.0444);transform-origin:0 0;">4 spaces</div>
<div class="u" style="left:1795.4px;top:963.30px;font-size:15.00px;line-height:15.00px;color:#bbbbbb;transform:scaleX(1.0904);transform-origin:0 0;">Python 3.8</div>
<svg class="a" style="left:1886px;top:963px" width="16" height="15" viewBox="0 0 16 15"><path d="M2 7 V4.5 A3.5 3.5 0 0 1 9 4.5 V6" stroke="#afb1b3" stroke-width="1.8" fill="none"/><rect x="4" y="6.5" width="11" height="8.5" fill="#afb1b3"/></svg></body></html>
